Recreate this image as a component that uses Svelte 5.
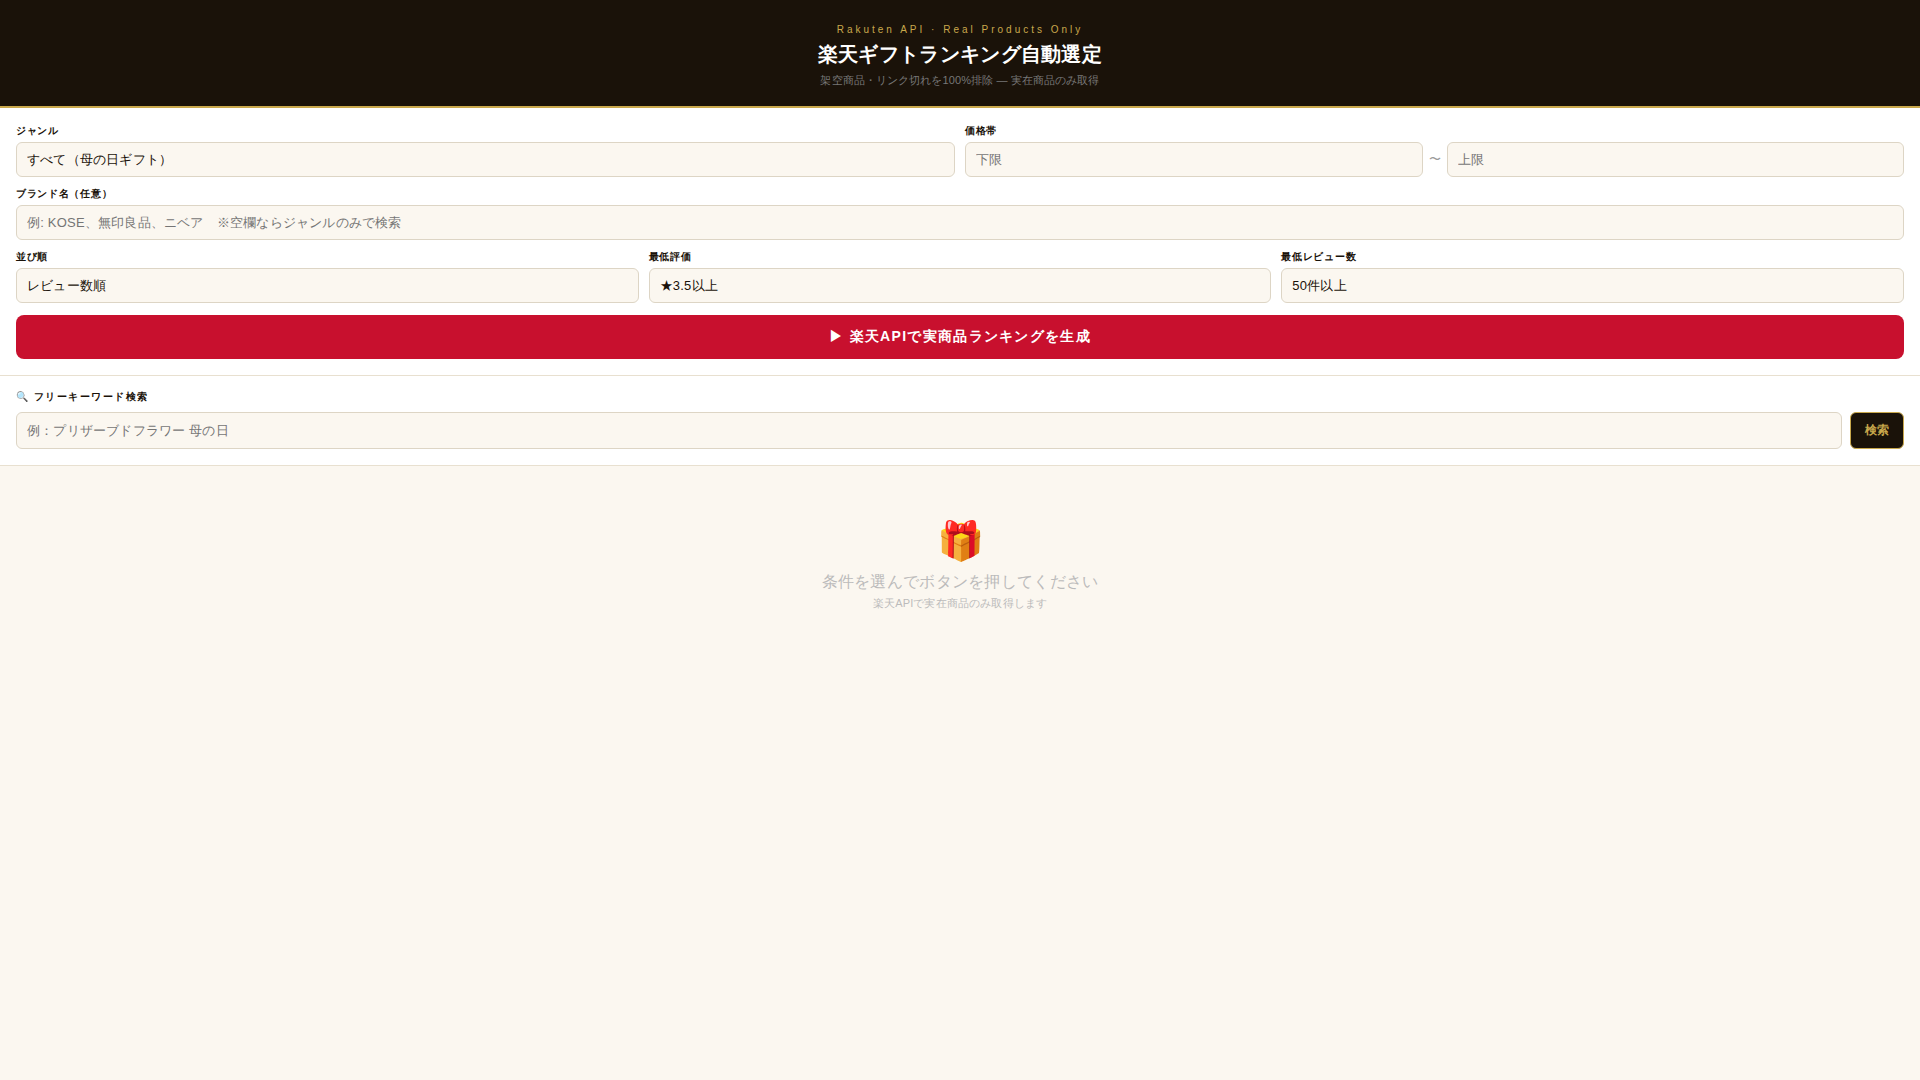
<script>
	let genre = $state('all');
	let minPrice = $state('');
	let maxPrice = $state('');
	let brand = $state('');
	let sort = $state('review');
	let rating = $state('3.5');
	let reviews = $state('50');
	let keyword = $state('');
</script>

<div class="page" lang="ja">
	<header class="hero">
		<p class="eyebrow">Rakuten API · Real Products Only</p>
		<h1>楽天ギフトランキング自動選定</h1>
		<p class="lead">架空商品・リンク切れを100%排除 — 実在商品のみ取得</p>
	</header>

	<section class="form">
		<div class="row two">
			<div class="field">
				<label for="genre">ジャンル</label>
				<select id="genre" bind:value={genre}>
					<option value="all">すべて（母の日ギフト）</option>
				</select>
			</div>
			<div class="field">
				<label for="min">価格帯</label>
				<div class="range">
					<input id="min" placeholder="下限" bind:value={minPrice} />
					<span class="tilde">〜</span>
					<input placeholder="上限" aria-label="上限" bind:value={maxPrice} />
				</div>
			</div>
		</div>

		<div class="field">
			<label for="brand">ブランド名（任意）</label>
			<input id="brand" placeholder="例: KOSE、無印良品、ニベア　※空欄ならジャンルのみで検索" bind:value={brand} />
		</div>

		<div class="row three">
			<div class="field">
				<label for="sort">並び順</label>
				<select id="sort" bind:value={sort}>
					<option value="review">レビュー数順</option>
				</select>
			</div>
			<div class="field">
				<label for="rating">最低評価</label>
				<select id="rating" bind:value={rating}>
					<option value="3.5">★3.5以上</option>
				</select>
			</div>
			<div class="field">
				<label for="reviews">最低レビュー数</label>
				<select id="reviews" bind:value={reviews}>
					<option value="50">50件以上</option>
				</select>
			</div>
		</div>

		<button class="generate" type="button">▶ 楽天APIで実商品ランキングを生成</button>
	</section>

	<section class="search">
		<label class="search-label" for="keyword">🔍 フリーキーワード検索</label>
		<div class="search-row">
			<input id="keyword" placeholder="例：プリザーブドフラワー 母の日" bind:value={keyword} />
			<button class="search-btn" type="button">検索</button>
		</div>
	</section>

	<main class="empty">
		<div class="gift">🎁</div>
		<p class="empty-title">条件を選んでボタンを押してください</p>
		<p class="empty-sub">楽天APIで実在商品のみ取得します</p>
	</main>
</div>

<style>
	:global(body) {
		background: #fbf7f0;
	}

	.page {
		min-height: 1080px;
		display: flex;
		flex-direction: column;
		font-family: "Liberation Sans", sans-serif;
		color: #1a1209;
		background: #fbf7f0;
	}

	.hero {
		box-sizing: border-box;
		height: 108px;
		padding-top: 22px;
		text-align: center;
		background: #1a1209;
		border-bottom: 2px solid #c9a84c;
	}

	.eyebrow {
		margin: 0;
		font-size: 10px;
		line-height: 15px;
		letter-spacing: 3px;
		color: #c9a84c;
	}

	h1 {
		margin: 2px 0 0;
		font-size: 20px;
		line-height: 30px;
		font-weight: 700;
		letter-spacing: 0.3px;
		color: #fff;
	}

	.lead {
		margin: 3px 0 0;
		font-size: 11px;
		line-height: 16px;
		letter-spacing: 0.1px;
		color: #777;
	}

	.form {
		display: flex;
		flex-direction: column;
		gap: 10px;
		padding: 16px 16px 16px;
		background: #fff;
		border-bottom: 1px solid #e8e0d0;
	}

	.row {
		display: grid;
		gap: 10px;
	}

	.two {
		grid-template-columns: 1fr 1fr;
	}

	.three {
		grid-template-columns: 1fr 1fr 1fr;
	}

	.field {
		display: flex;
		flex-direction: column;
		gap: 4px;
		min-width: 0;
	}

	label {
		font-size: 10px;
		line-height: 14px;
		font-weight: 700;
		letter-spacing: 0.7px;
		color: #1a1209;
	}

	input,
	select {
		box-sizing: border-box;
		width: 100%;
		min-width: 0;
		height: 35px;
		padding: 0 10px;
		border: 1px solid #ddd5c5;
		border-radius: 6px;
		font-family: inherit;
		font-size: 13px;
		letter-spacing: 0.2px;
		color: #1a1209;
		background: #fbf7f0;
		appearance: none;
		outline: none;
	}

	input::placeholder {
		color: #757575;
		opacity: 1;
	}

	.range {
		display: flex;
		align-items: center;
		gap: 6px;
	}

	.tilde {
		flex: none;
		font-size: 12px;
		color: #999;
	}

	.generate {
		height: 44px;
		margin-top: 2px;
		border: 0;
		border-radius: 8px;
		font-family: inherit;
		font-size: 14px;
		font-weight: 700;
		letter-spacing: 1.3px;
		color: #fff;
		background: #c8102e;
		cursor: pointer;
	}

	.search {
		padding: 13px 16px 16px;
		background: #fff;
		border-bottom: 1px solid #e8e0d0;
	}

	.search-label {
		display: block;
		margin-bottom: 7px;
		line-height: 16px;
		letter-spacing: 1.5px;
	}

	.search-row {
		display: flex;
		gap: 8px;
	}

	.search-row input {
		flex: 1;
		height: 37px;
	}

	.search-btn {
		flex: none;
		box-sizing: border-box;
		width: 54px;
		height: 37px;
		border: 1px solid #c9a84c;
		border-radius: 6px;
		font-family: inherit;
		font-size: 12px;
		font-weight: 700;
		letter-spacing: 0.5px;
		color: #c9a84c;
		background: #1a1209;
		cursor: pointer;
	}

	.empty {
		padding-top: 52px;
		text-align: center;
	}

	.gift {
		font-size: 38px;
		line-height: 46px;
	}

	.empty-title {
		margin: 6px 0 0;
		font-size: 16px;
		line-height: 24px;
		letter-spacing: 0.28px;
		color: #bbb;
	}

	.empty-sub {
		margin: 1px 0 0;
		font-size: 11px;
		line-height: 17px;
		letter-spacing: 0.15px;
		color: #bbb;
	}
</style>
